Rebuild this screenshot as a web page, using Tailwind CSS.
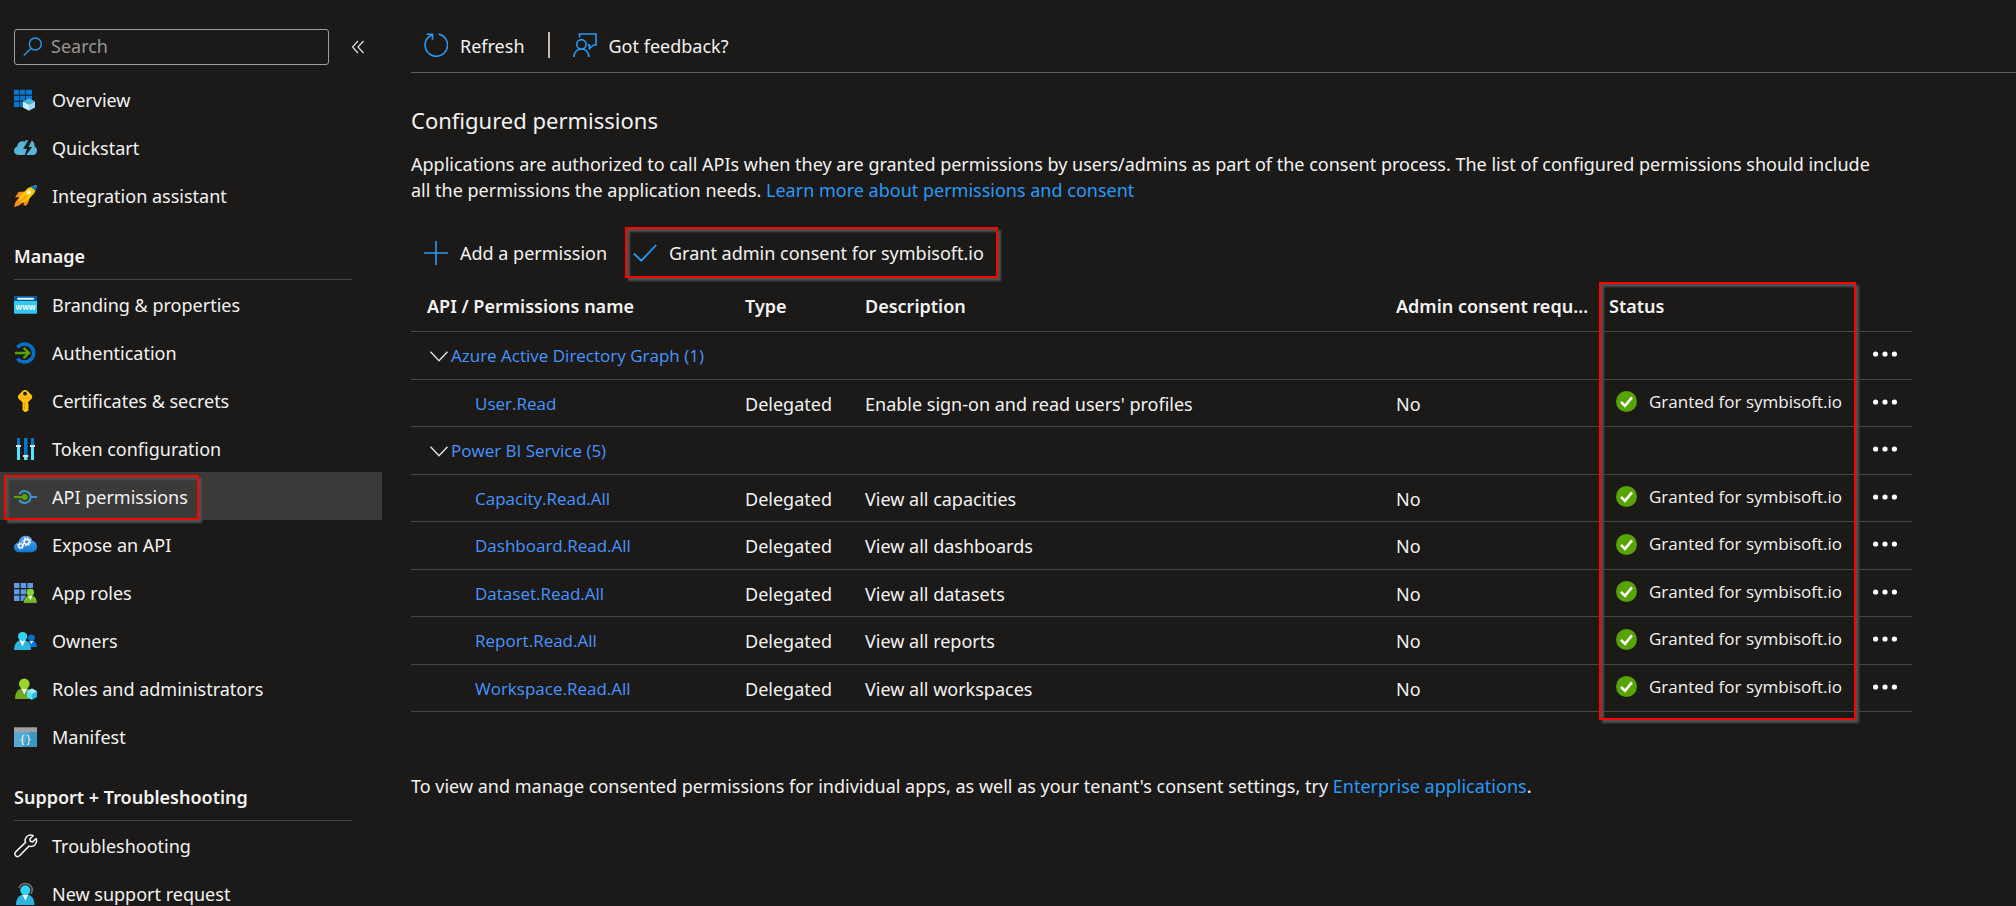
<!DOCTYPE html>
<html lang="en">
<head>
<meta charset="utf-8">
<title>API permissions</title>
<script src="https://cdn.jsdelivr.net/npm/@tailwindcss/browser@4"></script>
</head>
<body class="bg-[#1b1a19] text-[#f3f2f1] text-lg leading-[26px] font-['Noto_Sans','Open_Sans',sans-serif]">
<div class="flex h-screen overflow-hidden">

<!-- Side menu -->
<aside class="w-[382px] shrink-0">
  <div class="flex items-center pl-3.5 pt-[29px] pb-[11px]">
    <label class="flex h-9 w-[315px] items-center gap-2 rounded-[3px] border border-[#a19f9d] pl-2">
      <svg class="h-5 w-5 shrink-0" viewBox="0 0 20 20" fill="none" stroke="#2899f5" stroke-width="1.4"><circle cx="12.3" cy="7" r="6"/><path d="M8 11.4 .8 18.6"/></svg>
      <input type="text" placeholder="Search" aria-label="Search" class="min-w-0 flex-1 bg-transparent pb-0.5 outline-none placeholder:text-[#979593]">
    </label>
    <button aria-label="Collapse menu" class="ml-[22px] flex h-6 w-4 items-center"><svg class="h-3.5 w-4" viewBox="0 0 16 14" fill="none" stroke="#e1dfdd" stroke-width="1.2"><path d="M7 1 1.5 7 7 13M12.500 1 7 7l5.500 6"/></svg></button>
  </div>

  <nav>
    <a href="#" class="flex h-12 items-center gap-3.5 pl-3.5">
      <svg class="h-6 w-6" viewBox="0 0 24 24"><path fill="#0078d4" d="M0 1.700h5.200v5H0zM6 1.700h5.200v5H6zM12 1.700h6v5h-6zM0 7.700h5.200v5H0zM6 7.700h5.200v5H6zM12 7.700h6v5h-6zM0 13.700h5.200v5.300H0zM6 13.700h5.200v5.300H6z"/><path fill="#50b0dc" d="m15 10.300 6 3.100-6 3.200-6-3.200z"/><path fill="#c3f1ff" d="m9 13.400 6 3.200v6.200l-6-3.200z"/><path fill="#9cdcf3" d="m21 13.400-6 3.200v6.200l6-3.200z"/></svg>Overview</a>
    <a href="#" class="flex h-12 items-center gap-3.5 pl-3.5">
      <svg class="h-6 w-6" viewBox="0 0 24 24"><path fill="#59b4d9" d="M4.500 19C1.800 19 0 17.200 0 14.800c0-2.200 1.500-3.900 3.300-4.200C3.400 7.500 5.700 5.300 8.300 5.300c.8 0 1.500.1 2.200.5l1.300-1.500h2.400L11 9.800l-2 2.900h4L10.700 19z"/><path fill="#59b4d9" d="M12.200 19 18 11h-3.500l3.200-6.500c2 1 3.100 3.200 2.900 6 1.500.7 2.400 2.300 2.400 4 0 2.600-1.600 4.500-4 4.500z"/></svg>Quickstart</a>
    <a href="#" class="flex h-12 items-center gap-3.5 pl-3.5">
      <svg class="h-6 w-6" viewBox="0 0 24 24"><path fill="#f78d1e" d="M9.500 7.500 4.500 8 1 13.500l4.300-.4L1.500 18 0 23l5-1.500 4.500-3.600.3 3.800 3.600-2.200 2.500-6z"/><path fill="#ffca00" d="M21.500 1 14 4 6.500 11.500 4.700 17l2.800 1.700 5.300-1.400L20.500 9 23 1.500z"/><path fill="#f78d1e" d="m5.500 19.500-1-1L12 11l1 1zM10 19l3.500-3.200 1.800.7-3 5-1 .5z"/><path fill="#0078d4" d="m23 1-.9 4.300-1.300 1.200-4-3.600 1.700-.9z"/><circle cx="15" cy="8.300" r="2" fill="#fff"/></svg>Integration assistant</a>

    <h2 class="mr-[30px] ml-3.5 flex h-[60px] items-center border-b border-[#484644] pt-3 font-semibold">Manage</h2>
    <a href="#" class="flex h-12 items-center gap-3.5 pt-0.5 pl-3.5">
      <svg class="h-6 w-6" viewBox="0 0 24 24"><rect y="3" width="23" height="17.700" rx="1" fill="#32c8ee"/><path fill="#005ba1" d="M1 3h21a1 1 0 0 1 1 1v4H0V4a1 1 0 0 1 1-1z"/><rect x="3.200" y="4.700" width="17" height="2" rx="1" fill="#f2f2f2"/><text x="11.500" y="16.500" text-anchor="middle" font-size="8" font-weight="600" fill="#fff">www</text></svg>Branding &amp; properties</a>
    <a href="#" class="flex h-12 items-center gap-3.5 pt-0.5 pl-3.5">
      <svg class="h-6 w-6" viewBox="0 0 24 24" fill="none"><path stroke="#0072c9" stroke-width="3.600" d="M3.500 6.500A9 9 0 1 1 3.500 17.500"/><path stroke="#57a300" stroke-width="2.400" d="M1 12h14M9.500 6.800l5.500 5.200-5.500 5.200"/></svg>Authentication</a>
    <a href="#" class="flex h-12 items-center gap-3.5 pt-0.5 pl-3.5">
      <svg class="h-6 w-6" viewBox="0 0 24 24"><path fill="#ffc211" fill-rule="evenodd" d="M11 1c1.200 0 2 .5 3 1.500L17.500 6c1 1.200 1.100 2.600 0 3.800L14 13.300v1.500l1 1-1 1 1 1.100-1 1.100.5 1v1.500L11.600 23h-1L8.500 21v-7.800L4.600 9.700c-1-1.200-1-2.500 0-3.700L8 2.500C9 1.500 9.800 1 11 1zm0 1.800a1.900 1.900 0 1 0 0 3.800 1.900 1.900 0 0 0 0-3.800z"/><path fill="#ff9300" d="M9.800 13.500h1.100v7l-1.100-1zM7 8.500h8v1H7z"/></svg>Certificates &amp; secrets</a>
    <a href="#" class="flex h-12 items-center gap-3.5 pt-0.5 pl-3.5">
      <svg class="h-6 w-6" viewBox="0 0 24 24"><path fill="#0078d4" d="M3 1h3v8H3zM10 1h3.500v17H10zM17 1h3v8h-3z"/><path fill="#50e6ff" d="M3 10h3v13H3zM10 20h3.500v3H10zM17 10h3v13h-3z"/><path fill="#e6e6e6" d="M2 8h5v2H2zM9 18h5.300v2H9zM16 8h5v2h-5z"/></svg>Token configuration</a>
    <a href="#" aria-current="page" class="relative flex h-12 items-center gap-3.5 bg-[#3b3a39] pt-0.5 pl-3.5">
      <svg class="h-6 w-6" viewBox="0 0 24 24" fill="none"><path stroke="#3999c6" stroke-width="2" d="M5.300 9.300a6 6 0 0 1 11.300 2.700H23M5.300 14.700A6 6 0 0 0 16.600 12"/><path stroke="#57a300" stroke-width="2.200" d="M0 12h9"/><circle cx="10.700" cy="12" r="3" fill="#57a300"/></svg>API permissions
      <span class="pointer-events-none absolute bottom-0 left-1 top-[3px] w-[195px] border-2 border-[#f00] shadow-[3px_3px_2px_0_#4f4f4f,inset_3px_3px_2px_0_#4f4f4f]"></span></a>
    <a href="#" class="flex h-12 items-center gap-3.5 pt-0.5 pl-3.5">
      <svg class="h-6 w-6" viewBox="0 0 24 24"><defs><linearGradient id="cloud" x2="0" y2="1"><stop stop-color="#5ea0ef"/><stop offset="1" stop-color="#0f78d4"/></linearGradient></defs><path fill="url(#cloud)" d="M5.500 19.200C2.300 19.200 0 17 0 14.200c0-2.500 1.900-4.500 4.500-4.800C5 5.600 8 2.700 11.800 2.700c3.300 0 6 2 6.900 5.200 2.600.3 4.300 2.700 4.300 5.500 0 3.300-2.300 5.800-5.500 5.800z"/><g fill="none" stroke="#fff"><circle cx="12.700" cy="8.700" r="2.500" stroke-width="1.400"/><circle cx="12.700" cy="8.700" r="3.900" stroke-width="1.200" stroke-dasharray="1.500 1.560"/><circle cx="6.700" cy="12.700" r="1.900" stroke-width="1.300"/><circle cx="6.700" cy="12.700" r="3" stroke-width="1.100" stroke-dasharray="1.200 1.156"/></g></svg>Expose an API</a>
    <a href="#" class="flex h-12 items-center gap-3.5 pt-0.5 pl-3.5">
      <svg class="h-6 w-6" viewBox="0 0 24 24"><path fill="#5b9bea" d="M0 2h5.500v5H0zM6.700 2h5.500v5H6.700zM13.400 2H19v5h-5.600zM0 8.300h5.500v5H0zM6.700 8.300h5.500v5H6.700zM13.400 8.300H19v5h-5.600zM0 14.600h5.500V20H0zM6.700 14.600h5.500V20H6.700z"/><path fill="#76bc2d" stroke="#1b1a19" stroke-width=".8" d="M9.400 22.300c0-5 2.300-8 6.900-8s6.900 3 6.900 8z"/><path fill="#fff" d="m13.900 14.500 2.400 4.500 2.300-4.500z"/><circle cx="16.300" cy="11.500" r="3.700" fill="#86d633"/></svg>App roles</a>
    <a href="#" class="flex h-12 items-center gap-3.5 pt-0.5 pl-3.5">
      <svg class="h-6 w-6" viewBox="0 0 24 24"><path fill="#0078d4" d="M14 18h8.500c.5 0 .6-.3.500-.8-.5-3.700-2.500-5.700-5.500-5.700s-4 2-3.500 6.500z"/><path fill="#fff" d="M15.500 11.500h4L17.500 15z"/><circle cx="17.500" cy="8.800" r="3.400" fill="#0a6fc5"/><path fill="#2db5e0" d="M0 20c.7-6 3.500-9 8.500-9s7.900 3 8.500 9c0 .6-.3 1-1 1H1c-.7 0-1-.4-1-1z"/><path fill="#fff" d="m5.500 11 3 6.300 3-6.300z"/><circle cx="8.600" cy="7.500" r="4.600" fill="#32d4f5"/></svg>Owners</a>
    <a href="#" class="flex h-12 items-center gap-3.5 pt-0.5 pl-3.5">
      <svg class="h-6 w-6" viewBox="0 0 24 24"><path fill="#6fa81e" d="M1 21c.5-6.500 3.500-10 9.300-10 5.700 0 8.500 3.500 8.700 10 0 .6-.4 1-1 1H2c-.7 0-1-.4-1-1z"/><path fill="#fff" d="m7 10.500 3.300 7 3.200-7z"/><circle cx="10.300" cy="6.800" r="5.300" fill="#9bd52b"/><path fill="#32bedd" d="m18 11.500 5 2.800v5.600l-5 2.800-5-2.800v-5.600z"/><path fill="#9cebff" d="m18 11.500 5 2.800-5 2.800-5-2.800z"/><path fill="#50e6ff" d="m13 14.300 5 2.800v5.600l-5-2.800z"/></svg>Roles and administrators</a>
    <a href="#" class="flex h-12 items-center gap-3.5 pt-0.5 pl-3.5">
      <svg class="h-6 w-6" viewBox="0 0 24 24"><path fill="#3999c6" d="M0 6h23v16H0z"/><path fill="#59a9d0" d="M0 6h16L9 22H0z"/><path fill="#a0a1a2" d="M0 2.300h23V7H0z"/><text x="11.500" y="17.500" text-anchor="middle" font-size="10" fill="#fff">{ }</text></svg>Manifest</a>

    <h2 class="mr-[30px] ml-3.5 flex h-[61px] items-center border-b border-[#484644] pt-3.5 font-semibold">Support + Troubleshooting</h2>
    <a href="#" class="mt-px flex h-12 items-center gap-3.5 pl-3.5">
      <svg class="h-6 w-6" viewBox="0 0 24 24" fill="none" stroke="#f3f2f1" stroke-width="1.500" stroke-linejoin="round"><path d="M19.200 1.700 15.800 5l.5 2.300 2.400.6 3.400-3.400c1 2.600.2 5-1.400 6.500-1.500 1.400-3.700 1.800-5.700 1.100L5.500 21.700c-1.200 1.100-2.800 1-3.800 0-1-1-1-2.700 0-3.800l9.800-9.500c-.8-2-.3-4.200 1.200-5.700 1.700-1.600 4.100-2.100 6.500-1z"/></svg>Troubleshooting</a>
    <a href="#" class="flex h-12 items-center gap-3.5 pl-3.5">
      <svg class="h-6 w-6" viewBox="0 0 24 24"><path fill="none" stroke="#76716d" stroke-width="1.500" d="M5 6c1.200-3 3.300-4.500 6-4.500 4.500 0 7.500 3 7.200 7 0 1.500-.7 2.700-1.800 3.500"/><path fill="#2db5e0" d="M2 22c.5-6.500 3.500-9.500 9.300-9.500S20 15.500 20.400 22c0 .6-.4 1-1 1H3c-.7 0-1-.4-1-1z"/><path fill="#fff" d="m8.300 12.500 3 6 3-6z"/><circle cx="11.300" cy="8.300" r="5" fill="#32d4f5"/></svg>New support request</a>
  </nav>
</aside>

<!-- Content -->
<main class="min-w-0 flex-1 pl-[29px]">
  <div class="flex h-[73px] items-center border-b border-[#605e5c] pt-[18px] pl-[13px]">
    <button class="flex items-center gap-3">
      <svg class="h-6 w-6" viewBox="0 0 24 24" fill="none" stroke="#2899f5" stroke-width="1.600"><path d="M14.800 1.100A11.200 11.200 0 1 1 4.500 4M2.500 1.200h6v5.500M8.400 1.300 4 4.700"/></svg><span class="pt-0.5">Refresh</span></button>
    <span class="mx-[23px] h-[26px] w-0.5 bg-[#bebbb8]"></span>
    <button class="flex items-center gap-3">
      <svg class="h-6 w-6" viewBox="0 0 24 24" fill="none" stroke="#2899f5" stroke-width="1.600"><path d="M6.500 4.500V1H23v11h-2.500l-4 3.500V12H14.500"/><circle cx="8.400" cy="11.300" r="4.700"/><path d="M.9 24c0-4.800 3.200-8 7.500-8s7.500 3.200 7.500 8"/></svg><span class="pt-0.5">Got feedback?</span></button>
  </div>

  <div class="mr-[104px]">
    <h1 class="pt-[31px] text-[22px] leading-8">Configured permissions</h1>
    <p class="pt-[15px] pr-7">Applications are authorized to call APIs when they are granted permissions by users/admins as part of the consent process. The list of configured permissions should include all the permissions the application needs. <a href="#" class="text-[#2899f5]">Learn more about permissions and consent</a></p>

    <div class="mt-6 flex items-center pl-[13px]">
      <button class="flex w-[201px] items-center gap-3 whitespace-nowrap">
        <svg class="h-6 w-6 shrink-0" viewBox="0 0 24 24" stroke="#2899f5" stroke-width="1.600"><path d="M12 0v24M0 12h24"/></svg>Add a permission</button>
      <button class="flex h-[51px] w-[373px] items-center gap-3 border-2 border-[#f00] pl-1.5 whitespace-nowrap shadow-[3px_3px_2px_0_#4f4f4f,inset_3px_3px_2px_0_#4f4f4f]">
        <svg class="h-6 w-6 shrink-0" viewBox="0 0 24 24" fill="none" stroke="#2899f5" stroke-width="1.800"><path d="m.8 12.500 7.500 7.200L23.200 4"/></svg>Grant admin consent for symbisoft.io</button>
    </div>

    <div class="relative mt-[3px]">
      <table class="w-full table-fixed border-collapse text-left">
        <colgroup><col class="w-[334px]"><col class="w-[120px]"><col><col class="w-[213px]"><col class="w-[252px]"><col class="w-[51px]"></colgroup>
        <thead>
          <tr class="h-[50px] border-b border-[#484644]"><th class="pl-4 font-semibold">API / Permissions name</th><th class="font-semibold">Type</th><th class="font-semibold">Description</th><th class="truncate pr-[18px] font-semibold">Admin consent required</th><th class="font-semibold">Status</th><th><span class="sr-only">Actions</span></th></tr>
        </thead>
        <tbody class="[&_td]:pt-0.5">
          <tr class="h-12 border-b border-[#484644]"><td colspan="5"><div class="flex items-center gap-[3px] pl-[19px] font-['Open_Sans',sans-serif] text-[17px]"><svg class="h-[11px] w-[18px]" viewBox="0 0 18 11" fill="none" stroke="#e1dfdd" stroke-width="1.500"><path d="m.5.7 8.500 9 8.500-9"/></svg><a href="#" class="text-[#4894fe]">Azure Active Directory Graph (1)</a></div></td><td><button aria-label="More" class="block pl-3 pb-1"><svg class="h-1.5 w-6" viewBox="0 0 24 6" fill="#fff"><circle cx="2.600" cy="3" r="2.600"/><circle cx="12" cy="3" r="2.600"/><circle cx="21.400" cy="3" r="2.600"/></svg></button></td></tr>
          <tr class="h-[47px] border-b border-[#484644]"><td class="pl-16 font-['Open_Sans',sans-serif] text-[17px]"><a href="#" class="text-[#4894fe]">User.Read</a></td><td>Delegated</td><td>Enable sign-on and read users' profiles</td><td>No</td><td><div class="flex items-center gap-3 pb-1 pl-[7px] font-['Open_Sans',sans-serif] text-[17px]"><svg class="h-[21px] w-[21px]" viewBox="0 0 21 21"><circle cx="10.500" cy="10.500" r="10.500" fill="#57a300"/><path fill="none" stroke="#fff" stroke-width="2.600" d="m5 10.800 4 4 7-8.500"/></svg>Granted for symbisoft.io</div></td><td><button aria-label="More" class="block pl-3 pb-1"><svg class="h-1.5 w-6" viewBox="0 0 24 6" fill="#fff"><circle cx="2.600" cy="3" r="2.600"/><circle cx="12" cy="3" r="2.600"/><circle cx="21.400" cy="3" r="2.600"/></svg></button></td></tr>
          <tr class="h-12 border-b border-[#484644]"><td colspan="5"><div class="flex items-center gap-[3px] pl-[19px] font-['Open_Sans',sans-serif] text-[17px]"><svg class="h-[11px] w-[18px]" viewBox="0 0 18 11" fill="none" stroke="#e1dfdd" stroke-width="1.500"><path d="m.5.7 8.500 9 8.500-9"/></svg><a href="#" class="text-[#4894fe]">Power BI Service (5)</a></div></td><td><button aria-label="More" class="block pl-3 pb-1"><svg class="h-1.5 w-6" viewBox="0 0 24 6" fill="#fff"><circle cx="2.600" cy="3" r="2.600"/><circle cx="12" cy="3" r="2.600"/><circle cx="21.400" cy="3" r="2.600"/></svg></button></td></tr>
          <tr class="h-[47px] border-b border-[#484644]"><td class="pl-16 font-['Open_Sans',sans-serif] text-[17px]"><a href="#" class="text-[#4894fe]">Capacity.Read.All</a></td><td>Delegated</td><td>View all capacities</td><td>No</td><td><div class="flex items-center gap-3 pb-1 pl-[7px] font-['Open_Sans',sans-serif] text-[17px]"><svg class="h-[21px] w-[21px]" viewBox="0 0 21 21"><circle cx="10.500" cy="10.500" r="10.500" fill="#57a300"/><path fill="none" stroke="#fff" stroke-width="2.600" d="m5 10.800 4 4 7-8.500"/></svg>Granted for symbisoft.io</div></td><td><button aria-label="More" class="block pl-3 pb-1"><svg class="h-1.5 w-6" viewBox="0 0 24 6" fill="#fff"><circle cx="2.600" cy="3" r="2.600"/><circle cx="12" cy="3" r="2.600"/><circle cx="21.400" cy="3" r="2.600"/></svg></button></td></tr>
          <tr class="h-12 border-b border-[#484644]"><td class="pl-16 font-['Open_Sans',sans-serif] text-[17px]"><a href="#" class="text-[#4894fe]">Dashboard.Read.All</a></td><td>Delegated</td><td>View all dashboards</td><td>No</td><td><div class="flex items-center gap-3 pb-1 pl-[7px] font-['Open_Sans',sans-serif] text-[17px]"><svg class="h-[21px] w-[21px]" viewBox="0 0 21 21"><circle cx="10.500" cy="10.500" r="10.500" fill="#57a300"/><path fill="none" stroke="#fff" stroke-width="2.600" d="m5 10.800 4 4 7-8.500"/></svg>Granted for symbisoft.io</div></td><td><button aria-label="More" class="block pl-3 pb-1"><svg class="h-1.5 w-6" viewBox="0 0 24 6" fill="#fff"><circle cx="2.600" cy="3" r="2.600"/><circle cx="12" cy="3" r="2.600"/><circle cx="21.400" cy="3" r="2.600"/></svg></button></td></tr>
          <tr class="h-[47px] border-b border-[#484644]"><td class="pl-16 font-['Open_Sans',sans-serif] text-[17px]"><a href="#" class="text-[#4894fe]">Dataset.Read.All</a></td><td>Delegated</td><td>View all datasets</td><td>No</td><td><div class="flex items-center gap-3 pb-1 pl-[7px] font-['Open_Sans',sans-serif] text-[17px]"><svg class="h-[21px] w-[21px]" viewBox="0 0 21 21"><circle cx="10.500" cy="10.500" r="10.500" fill="#57a300"/><path fill="none" stroke="#fff" stroke-width="2.600" d="m5 10.800 4 4 7-8.500"/></svg>Granted for symbisoft.io</div></td><td><button aria-label="More" class="block pl-3 pb-1"><svg class="h-1.5 w-6" viewBox="0 0 24 6" fill="#fff"><circle cx="2.600" cy="3" r="2.600"/><circle cx="12" cy="3" r="2.600"/><circle cx="21.400" cy="3" r="2.600"/></svg></button></td></tr>
          <tr class="h-12 border-b border-[#484644]"><td class="pl-16 font-['Open_Sans',sans-serif] text-[17px]"><a href="#" class="text-[#4894fe]">Report.Read.All</a></td><td>Delegated</td><td>View all reports</td><td>No</td><td><div class="flex items-center gap-3 pb-1 pl-[7px] font-['Open_Sans',sans-serif] text-[17px]"><svg class="h-[21px] w-[21px]" viewBox="0 0 21 21"><circle cx="10.500" cy="10.500" r="10.500" fill="#57a300"/><path fill="none" stroke="#fff" stroke-width="2.600" d="m5 10.800 4 4 7-8.500"/></svg>Granted for symbisoft.io</div></td><td><button aria-label="More" class="block pl-3 pb-1"><svg class="h-1.5 w-6" viewBox="0 0 24 6" fill="#fff"><circle cx="2.600" cy="3" r="2.600"/><circle cx="12" cy="3" r="2.600"/><circle cx="21.400" cy="3" r="2.600"/></svg></button></td></tr>
          <tr class="h-[47px] border-b border-[#484644]"><td class="pl-16 font-['Open_Sans',sans-serif] text-[17px]"><a href="#" class="text-[#4894fe]">Workspace.Read.All</a></td><td>Delegated</td><td>View all workspaces</td><td>No</td><td><div class="flex items-center gap-3 pb-1 pl-[7px] font-['Open_Sans',sans-serif] text-[17px]"><svg class="h-[21px] w-[21px]" viewBox="0 0 21 21"><circle cx="10.500" cy="10.500" r="10.500" fill="#57a300"/><path fill="none" stroke="#fff" stroke-width="2.600" d="m5 10.800 4 4 7-8.500"/></svg>Granted for symbisoft.io</div></td><td><button aria-label="More" class="block pl-3 pb-1"><svg class="h-1.5 w-6" viewBox="0 0 24 6" fill="#fff"><circle cx="2.600" cy="3" r="2.600"/><circle cx="12" cy="3" r="2.600"/><circle cx="21.400" cy="3" r="2.600"/></svg></button></td></tr>
        </tbody>
      </table>
      <!-- Highlight round the Status column -->
      <span class="pointer-events-none absolute top-px right-14 -bottom-2 w-[257px] border-2 border-[#f00] shadow-[3px_3px_2px_0_#4f4f4f,inset_3px_3px_2px_0_#4f4f4f]"></span>
    </div>

    <p class="mt-[61px]">To view and manage consented permissions for individual apps, as well as your tenant's consent settings, try <a href="#" class="text-[#2899f5]">Enterprise applications</a>.</p>
  </div>
</main>
</div>
</body>
</html>
